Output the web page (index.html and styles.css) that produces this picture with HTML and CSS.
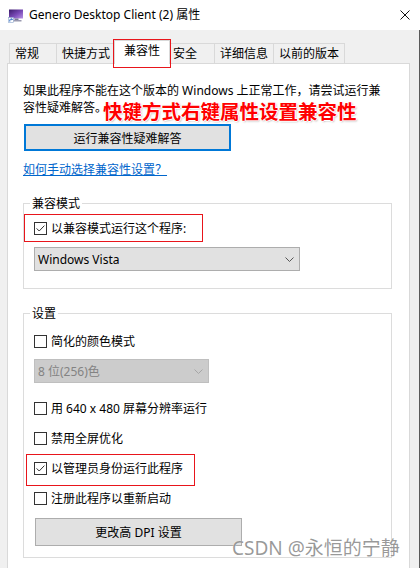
FILE: index.html
```html
<!DOCTYPE html>
<html lang="zh-CN">
<head>
<meta charset="utf-8">
<title>Genero Desktop Client (2) 属性</title>
<link rel="stylesheet" href="styles.css">
</head>
<body>
<div class="window">
  <header class="titlebar">
    <svg class="app-icon" viewBox="0 0 15 14" aria-hidden="true">
      <defs>
        <linearGradient id="scr" x1="0" y1="0" x2="1" y2="1">
          <stop offset="0" stop-color="#3a1a6a"/>
          <stop offset="0.55" stop-color="#7a4bb8"/>
          <stop offset="1" stop-color="#b994e6"/>
        </linearGradient>
      </defs>
      <rect x="1" y="0.5" width="14" height="9" fill="url(#scr)"/>
      <rect x="6.5" y="9.5" width="4" height="1.5" fill="#7d7d95"/>
      <rect x="4.5" y="11" width="9" height="1.5" fill="#9a9ab0"/>
      <rect x="0.5" y="8.5" width="5" height="5" fill="#fff" stroke="#8aa6cc" stroke-width="0.6"/>
      <path d="M1.8 12.6 V10.9 Q1.8 10.3 2.4 10.3 H4.3 M3.5 9.4 L4.4 10.3 L3.5 11.2" fill="none" stroke="#1a5fc2" stroke-width="0.9"/>
    </svg>
    <span class="title">Genero Desktop Client (2) 属性</span>
    <svg class="close" viewBox="0 0 10 10" aria-hidden="true">
      <path d="M0.5 0.5 L9.5 9.5 M9.5 0.5 L0.5 9.5" stroke="#111" stroke-width="1" fill="none"/>
    </svg>
  </header>

  <div class="main">
    <nav class="tabs">
      <span class="tab">常规</span>
      <span class="tab">快捷方式</span>
      <span class="tab active">兼容性</span>
      <span class="tab">安全</span>
      <span class="tab">详细信息</span>
      <span class="tab">以前的版本</span>
    </nav>

    <section class="panel">
      <p class="intro">如果此程序不能在这个版本的 Windows 上正常工作，请尝试运行兼<br>容性疑难解答。<span class="annotation">快键方式右键属性设置兼容性</span></p>
      <button class="btn btn-focus" type="button">运行兼容性疑难解答</button>
      <a class="link" href="#">如何手动选择兼容性设置？</a>

      <fieldset class="group group-compat">
        <legend>兼容模式</legend>
        <div class="mark mark-compat">
          <div class="check">
            <svg class="box" viewBox="0 0 13 13"><rect x="0.5" y="0.5" width="12" height="12" fill="#fff" stroke="#333"/><path d="M2.6 6.4 L5.2 9 L10.4 3.6" fill="none" stroke="#333" stroke-width="1"/></svg>
            <span>以兼容模式运行这个程序:</span>
          </div>
        </div>
        <div class="select select-os">
          <span>Windows Vista</span>
          <svg class="chev" viewBox="0 0 9 5"><path d="M0.5 0.5 L4.5 4.5 L8.5 0.5" fill="none" stroke="#555" stroke-width="1"/></svg>
        </div>
      </fieldset>

      <fieldset class="group group-settings">
        <legend>设置</legend>
        <div class="check row-color">
          <svg class="box" viewBox="0 0 13 13"><rect x="0.5" y="0.5" width="12" height="12" fill="#fff" stroke="#333"/></svg>
          <span>简化的颜色模式</span>
        </div>
        <div class="select select-color disabled">
          <span>8 位(256)色</span>
          <svg class="chev" viewBox="0 0 9 5"><path d="M0.5 0.5 L4.5 4.5 L8.5 0.5" fill="none" stroke="#a6a6a6" stroke-width="1"/></svg>
        </div>
        <div class="check row-res">
          <svg class="box" viewBox="0 0 13 13"><rect x="0.5" y="0.5" width="12" height="12" fill="#fff" stroke="#333"/></svg>
          <span>用 640 x 480 屏幕分辨率运行</span>
        </div>
        <div class="check row-full">
          <svg class="box" viewBox="0 0 13 13"><rect x="0.5" y="0.5" width="12" height="12" fill="#fff" stroke="#333"/></svg>
          <span>禁用全屏优化</span>
        </div>
        <div class="mark mark-admin">
          <div class="check">
            <svg class="box" viewBox="0 0 13 13"><rect x="0.5" y="0.5" width="12" height="12" fill="#fff" stroke="#333"/><path d="M2.6 6.4 L5.2 9 L10.4 3.6" fill="none" stroke="#333" stroke-width="1"/></svg>
            <span>以管理员身份运行此程序</span>
          </div>
        </div>
        <div class="check row-restart">
          <svg class="box" viewBox="0 0 13 13"><rect x="0.5" y="0.5" width="12" height="12" fill="#fff" stroke="#333"/></svg>
          <span>注册此程序以重新启动</span>
        </div>
        <button class="btn btn-dpi" type="button">更改高 DPI 设置</button>
      </fieldset>
    </section>
  </div>

  <div class="watermark">CSDN @永恒的宁静</div>
</div>
</body>
</html>
```
FILE: styles.css
```css
* { box-sizing: border-box; }
html, body { margin: 0; padding: 0; }
body {
  width: 420px;
  height: 568px;
  overflow: hidden;
  background: #f0f0f0;
  font-family: "Noto Sans", "Noto Sans CJK SC", sans-serif;
  font-size: 12px;
  color: #000;
}
.window {
  position: relative;
  height: 568px;
  display: flex;
  flex-direction: column;
  overflow: hidden;
}
.titlebar {
  height: 30px;
  flex: 0 0 30px;
  background: #fff;
  display: flex;
  align-items: center;
  padding: 0 10px 0 8px;
}
.app-icon { width: 15px; height: 14px; margin-right: 6px; margin-top: 1px; }
.title { flex: 1; font-size: 12px; line-height: 16px; }
.close { width: 10px; height: 10px; }

.main {
  flex: 1;
  min-height: 0;
  border-right: 1px solid #5a5a5a;
}
.tabs {
  display: flex;
  align-items: flex-start;
  margin-top: 13px;
  padding-left: 9px;
  height: 20px;
  position: relative;
  z-index: 1;
}
.tab {
  height: 20px;
  min-width: 47px;
  padding: 0 5px;
  border: 1px solid #d9d9d9;
  border-left: 0;
  border-bottom: 0;
  line-height: 19px;
  white-space: nowrap;
}
.tab:first-child { border-left: 1px solid #d9d9d9; min-width: 48px; }
.tab.active {
  background: #fff;
  margin: -3px -2px 0;
  height: 24px;
  padding: 0 9px;
  border-left: 1px solid #d9d9d9;
  line-height: 20px;
  position: relative;
}
.tab.active::after {
  content: "";
  position: absolute;
  left: -2px; right: -2px; top: -2px; bottom: -4px;
  border: 1px solid #e8151b;
}

.panel {
  margin-left: 7px;
  width: 403px;
  height: 505px;
  background: #fff;
  border: 1px solid #d9d9d9;
  border-bottom: 0;
  padding: 18px 17px 0 15px;
}
.intro { margin: 0; line-height: 17px; white-space: nowrap; }
.annotation {
  font-family: "Noto Sans CJK SC", sans-serif;
  font-weight: 700;
  font-size: 19.5px;
  line-height: 10px;
  vertical-align: -7px;
  margin-left: -4px;
  color: #ff0000;
  text-shadow: -1px 0 #fff, 1px 0 #fff, 0 -1px #fff, 0 1px #fff, 1px 1px 2px rgba(0,0,0,0.35);
}
.btn {
  display: block;
  width: 207px;
  font-family: "Noto Sans", "Noto Sans CJK SC", sans-serif;
  font-size: 12px;
  color: #000;
  background: #e1e1e1;
  border: 1px solid #adadad;
  padding: 0;
  text-align: center;
}
.btn-focus {
  margin-top: 8px;
  height: 27px;
  border: 2px solid #0078d7;
  margin-left: 1px;
}
.link {
  display: block;
  width: fit-content;
  margin-top: 10px;
  line-height: 17px;
  color: #0066cc;
  text-decoration: underline;
}

.group {
  margin: 17px 0 0;
  padding: 0 10px 17px;
  border: 1px solid #dcdcdc;
  min-width: 0;
}
.group legend {
  padding: 0 2px;
  margin-left: -4px;
  line-height: 17px;
}
.group-settings { margin-top: 16px; padding-bottom: 11px; }

.check {
  display: flex;
  align-items: center;
  gap: 4px;
  height: 20px;
  white-space: nowrap;
}
.box { width: 13px; height: 13px; flex: 0 0 13px; }

.mark { border: 1px solid #e8151b; }
.mark-compat {
  margin: 2px 0 0 -10px;
  width: 179px;
  padding: 3px 9px;
}
.mark-admin {
  margin: 6px 0 0 -8px;
  width: 169px;
  padding: 3px 7px 7px;
}

.select {
  display: flex;
  align-items: center;
  justify-content: space-between;
  height: 24px;
  background: #e1e1e1;
  border: 1px solid #adadad;
  padding: 0 5px 0 3px;
}
.select-os { margin-top: 5px; width: 266px; }
.select.disabled {
  background: #cccccc;
  border-color: #bfbfbf;
  color: #838383;
}
.select-color { margin-top: 8px; width: 175px; }
.chev { width: 9px; height: 5px; }

.row-color { margin-top: 9px; }
.row-res { margin-top: 15px; }
.row-full { margin-top: 10px; }
.row-restart { margin-top: 2px; }
.btn-dpi { margin: 10px 0 0 1px; height: 28px; }

.watermark {
  position: absolute;
  left: 232px;
  top: 539px;
  font-size: 19px;
  line-height: 19px;
  color: rgba(120, 120, 120, 0.75);
  text-shadow: 0 0 1px rgba(255,255,255,0.9);
  white-space: nowrap;
}
```
